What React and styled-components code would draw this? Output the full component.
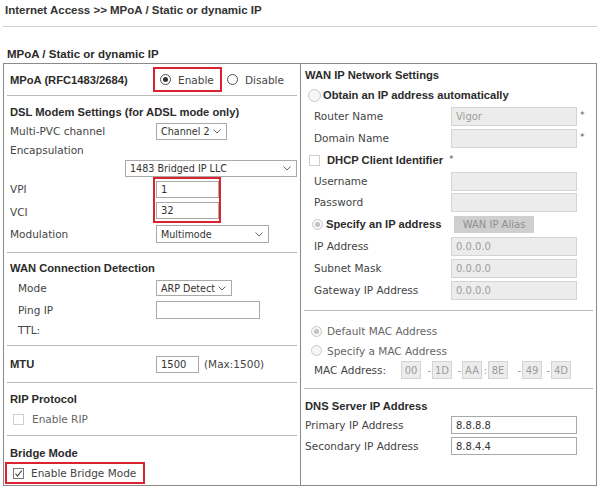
import React from 'react';
import styled, { createGlobalStyle } from 'styled-components';

const GlobalStyle = createGlobalStyle`
  html, body {
    margin: 0;
    padding: 0;
    background: #fff;
  }
  body {
    font-family: "DejaVu Sans", Verdana, sans-serif;
    font-size: 10.5px;
    color: #444;
  }
  * {
    box-sizing: border-box;
  }
`;

const Page = styled.div`
  width: 600px;
  height: 489px;
  overflow: hidden;
`;

const PageTitle = styled.div`
  height: 20px;
  line-height: 20px;
  padding-left: 5px;
  font-family: "Liberation Sans", Arial, sans-serif;
  font-weight: bold;
  font-size: 11.5px;
  color: #333;
`;

const Rule = styled.div`
  margin: 6px 3px 0 3px;
  border-top: 1px solid #d0d0d0;
`;

const Caption = styled.div`
  margin-top: 18px;
  height: 18px;
  line-height: 18px;
  padding-left: 7px;
  font-family: "Liberation Sans", Arial, sans-serif;
  font-weight: bold;
  font-size: 11.5px;
  color: #2b2b2b;
`;

const Frame = styled.div`
  margin: 0 3px;
  height: 423px;
  border: 1px solid #8a8a8a;
  display: grid;
  grid-template-columns: 297px 1fr;
`;

const Column = styled.div`
  padding: 0 3px;
  border-right: ${(p) => (p.$last ? 'none' : '1px solid #8a8a8a')};
  display: flex;
  flex-direction: column;
  overflow: hidden;
`;

const Section = styled.div`
  border-top: ${(p) => (p.$divider ? '1px solid #b9b9b9' : 'none')};
  padding-top: ${(p) => p.$pt || 0}px;
  padding-bottom: ${(p) => p.$pb || 0}px;
`;

const Row = styled.div`
  display: flex;
  align-items: center;
  height: ${(p) => p.$h}px;
  padding-left: ${(p) => (p.$indent === undefined ? 3 : p.$indent)}px;
  white-space: nowrap;
`;

const Heading = styled.span`
  font-family: "Liberation Sans", Arial, sans-serif;
  font-weight: bold;
  font-size: 11.2px;
  color: #2b2b2b;
`;

const Label = styled.span`
  flex-shrink: 0;
  width: ${(p) => p.$w}px;
  color: ${(p) => (p.$muted ? '#666' : '#444')};
`;

const Text = styled.span`
  margin-left: ${(p) => p.$gap || 0}px;
  color: ${(p) => (p.$muted ? '#666' : '#444')};
`;

const Field = styled.input`
  width: ${(p) => p.$w}px;
  height: ${(p) => p.$h || 18}px;
  margin: 0;
  padding: 0 ${(p) => (p.$center ? 0 : 4)}px;
  text-align: ${(p) => (p.$center ? 'center' : 'left')};
  font-family: "DejaVu Sans", Verdana, sans-serif;
  font-size: 10px;
  border: 1px solid ${(p) => (p.disabled ? '#d4d4d4' : '#a9a9a9')};
  background: ${(p) => (p.disabled ? '#ececec' : '#fff')};
  color: ${(p) => (p.disabled ? '#9c9c9c' : '#333')};
  border-radius: 0;
  outline: none;
`;

const SelectBox = styled.div`
  width: ${(p) => p.$w}px;
  height: ${(p) => p.$h || 17}px;
  margin-left: ${(p) => p.$offset || 0}px;
  border: 1px solid #a9a9a9;
  background: #fff;
  display: flex;
  align-items: center;
  justify-content: space-between;
  padding: 0 5px 0 4px;
  font-size: 9.6px;
  color: #333;
`;

const Highlight = styled.div`
  border: 2px solid #d9232e;
  width: ${(p) => p.$w}px;
  height: ${(p) => p.$h}px;
  margin-left: ${(p) => p.$offset || 0}px;
  padding-left: ${(p) => p.$pl || 0}px;
  display: flex;
  flex-direction: ${(p) => (p.$stack ? 'column' : 'row')};
  align-items: ${(p) => (p.$stack ? 'flex-start' : 'center')};
  justify-content: ${(p) => (p.$stack ? 'center' : 'flex-start')};
  gap: ${(p) => p.$gap || 0}px;
`;

const Stack = styled.div`
  display: flex;
  flex-direction: column;
`;

const Group = styled.div`
  display: flex;
  align-items: center;
`;

const Radio = styled.span`
  flex-shrink: 0;
  position: relative;
  width: ${(p) => p.$size || 11}px;
  height: ${(p) => p.$size || 11}px;
  margin-left: ${(p) => p.$gap || 0}px;
  border-radius: 50%;
  border: 1px solid ${(p) => (p.$disabled ? '#c9c9c9' : '#505050')};
  background: ${(p) => (p.$disabled ? '#f6f6f6' : '#fff')};

  &::after {
    content: '';
    display: ${(p) => (p.$checked ? 'block' : 'none')};
    position: absolute;
    left: 50%;
    top: 50%;
    width: 5px;
    height: 5px;
    margin: -2.5px 0 0 -2.5px;
    border-radius: 50%;
    background: ${(p) => (p.$disabled ? '#c2c2c2' : '#333')};
  }
`;

const Check = styled.span`
  flex-shrink: 0;
  width: 11px;
  height: 11px;
  border: 1px solid ${(p) => (p.$disabled ? '#cfcfcf' : '#777')};
  background: #fff;
  display: flex;
  align-items: center;
  justify-content: center;
`;

const Star = styled.span`
  margin-left: ${(p) => p.$gap || 3}px;
  font-size: 9px;
  color: #555;
  align-self: flex-start;
  margin-top: 5px;
`;

const AliasButton = styled.span`
  width: 80px;
  height: 17px;
  background: #cfcfcf;
  color: #8e8e8e;
  font-size: 10px;
  display: flex;
  align-items: center;
  justify-content: center;
`;

const Sep = styled.span`
  width: ${(p) => p.$w}px;
  text-align: right;
  padding-right: 1px;
  color: #999;
  font-size: 10px;
`;

const Chevron = () => (
  <svg width="8" height="5" viewBox="0 0 8 5">
    <polyline points="0.5,0.5 4,4 7.5,0.5" fill="none" stroke="#666" strokeWidth="1" />
  </svg>
);

const Tick = () => (
  <svg width="9" height="9" viewBox="0 0 9 9">
    <polyline points="1.5,4.5 3.5,7 7.8,1.5" fill="none" stroke="#444" strokeWidth="1.2" />
  </svg>
);

const Select = ({ w, offset, h, children }) => (
  <SelectBox $w={w} $offset={offset} $h={h}>
    <span>{children}</span>
    <Chevron />
  </SelectBox>
);

const macParts = [
  { sep: null, v: '00' },
  { sep: { w: 11, c: '-' }, v: '1D' },
  { sep: { w: 10, c: '-' }, v: 'AA' },
  { sep: { w: 6, c: ':' }, v: '8E' },
  { sep: { w: 14, c: '-' }, v: '49' },
  { sep: { w: 9, c: '-' }, v: '4D' },
];

const App = () => {
  return (
    <Page>
      <GlobalStyle />
      <PageTitle>Internet Access &gt;&gt; MPoA / Static or dynamic IP</PageTitle>
      <Rule />
      <Caption>MPoA / Static or dynamic IP</Caption>

      <Frame>
        {/* colonne gauche */}
        <Column>
          <Section>
            <Row $h={31}>
              <Label $w={143}>
                <Heading>MPoA (RFC1483/2684)</Heading>
              </Label>
              <Highlight $w={69} $h={25} $pl={5}>
                <Radio $checked />
                <Text $gap={7}>Enable</Text>
              </Highlight>
              <Radio $gap={5} />
              <Text $gap={7}>Disable</Text>
            </Row>
          </Section>

          <Section $divider $pt={6} $pb={7}>
            <Row $h={20}>
              <Heading>DSL Modem Settings (for ADSL mode only)</Heading>
            </Row>
            <Row $h={18}>
              <Label $w={146}>Multi-PVC channel</Label>
              <Select w={71}>Channel 2</Select>
            </Row>
            <Row $h={20}>
              <Label $w={146}>Encapsulation</Label>
            </Row>
            <Row $h={17}>
              <Select w={172} offset={115}>1483 Bridged IP LLC</Select>
            </Row>
            <Row $h={46}>
              <Stack>
                <Row $h={23} $indent={0}>
                  <Label $w={143}>VPI</Label>
                </Row>
                <Row $h={23} $indent={0}>
                  <Label $w={143}>VCI</Label>
                </Row>
              </Stack>
              <Highlight $w={68} $h={46} $pl={1} $stack $gap={4}>
                <Field $w={63} $h={17} value="1" readOnly />
                <Field $w={63} $h={17} value="32" readOnly />
              </Highlight>
            </Row>
            <Row $h={22}>
              <Label $w={146}>Modulation</Label>
              <Select w={113} h={18}>Multimode</Select>
            </Row>
          </Section>

          <Section $divider $pt={5} $pb={7}>
            <Row $h={20}>
              <Heading>WAN Connection Detection</Heading>
            </Row>
            <Row $h={20} $indent={11}>
              <Label $w={138}>Mode</Label>
              <Select w={76} h={16}>ARP Detect</Select>
            </Row>
            <Row $h={24} $indent={11}>
              <Label $w={138}>Ping IP</Label>
              <Field $w={104} value="" readOnly />
            </Row>
            <Row $h={16} $indent={11}>
              <Label $w={138}>TTL:</Label>
            </Row>
          </Section>

          <Section $divider>
            <Row $h={36}>
              <Label $w={146}>
                <Heading>MTU</Heading>
              </Label>
              <Field $w={43} $h={17} value="1500" readOnly />
              <Text $gap={5}>(Max:1500)</Text>
            </Row>
          </Section>

          <Section $divider $pt={6} $pb={6}>
            <Row $h={20}>
              <Heading>RIP Protocol</Heading>
            </Row>
            <Row $h={20} $indent={6}>
              <Check $disabled />
              <Text $gap={8} $muted>
                Enable RIP
              </Text>
            </Row>
          </Section>

          <Section $divider $pt={8}>
            <Row $h={18}>
              <Heading>Bridge Mode</Heading>
            </Row>
            <Highlight $w={140} $h={22} $offset={-2} $pl={6}>
              <Check>
                <Tick />
              </Check>
              <Text $gap={7}>Enable Bridge Mode</Text>
            </Highlight>
          </Section>
        </Column>

        {/* colonne droite */}
        <Column $last>
          <Section $pt={1} $pb={9}>
            <Row $h={20} $indent={1}>
              <Heading>WAN IP Network Settings</Heading>
            </Row>
            <Row $h={20} $indent={4}>
              <Radio $disabled $size={13} />
              <Text $gap={2}>
                <Heading>Obtain an IP address automatically</Heading>
              </Text>
            </Row>
            <Row $h={22} $indent={10}>
              <Label $w={137}>Router Name</Label>
              <Field $w={126} $h={19} value="Vigor" disabled readOnly />
              <Star>*</Star>
            </Row>
            <Row $h={22} $indent={10}>
              <Label $w={137}>Domain Name</Label>
              <Field $w={126} $h={19} value="" disabled readOnly />
              <Star>*</Star>
            </Row>
            <Row $h={22} $indent={5}>
              <Check $disabled />
              <Text $gap={7}>
                <Heading>DHCP Client Identifier</Heading>
              </Text>
              <Star $gap={6}>*</Star>
            </Row>
            <Row $h={20} $indent={10}>
              <Label $w={137}>Username</Label>
              <Field $w={126} $h={19} value="" disabled readOnly />
            </Row>
            <Row $h={22} $indent={10}>
              <Label $w={137}>Password</Label>
              <Field $w={126} $h={19} value="" disabled readOnly />
            </Row>
            <Row $h={22} $indent={8}>
              <Label $w={142}>
                <Group>
                  <Radio $disabled $checked />
                  <Text $gap={3}>
                    <Heading>Specify an IP address</Heading>
                  </Text>
                </Group>
              </Label>
              <AliasButton>WAN IP Alias</AliasButton>
            </Row>
            <Row $h={22} $indent={10}>
              <Label $w={137}>IP Address</Label>
              <Field $w={126} $h={19} value="0.0.0.0" disabled readOnly />
            </Row>
            <Row $h={22} $indent={10}>
              <Label $w={137}>Subnet Mask</Label>
              <Field $w={126} $h={19} value="0.0.0.0" disabled readOnly />
            </Row>
            <Row $h={22} $indent={10}>
              <Label $w={137}>Gateway IP Address</Label>
              <Field $w={126} $h={19} value="0.0.0.0" disabled readOnly />
            </Row>
          </Section>

          <Section $divider $pt={10} $pb={8}>
            <Row $h={20} $indent={7}>
              <Radio $disabled $checked />
              <Text $gap={5} $muted>
                Default MAC Address
              </Text>
            </Row>
            <Row $h={19} $indent={7}>
              <Radio $disabled />
              <Text $gap={5} $muted>
                Specify a MAC Address
              </Text>
            </Row>
            <Row $h={20} $indent={10}>
              <Label $w={87}>MAC Address:</Label>
              {macParts.map((p, i) => (
                <React.Fragment key={i}>
                  {p.sep && <Sep $w={p.sep.w}>{p.sep.c}</Sep>}
                  <Field $w={20} $h={18} value={p.v} disabled readOnly $center />
                </React.Fragment>
              ))}
            </Row>
          </Section>

          <Section $divider $pt={8}>
            <Row $h={18} $indent={1}>
              <Heading>DNS Server IP Address</Heading>
            </Row>
            <Row $h={20} $indent={1}>
              <Label $w={146}>Primary IP Address</Label>
              <Field $w={126} value="8.8.8.8" readOnly />
            </Row>
            <Row $h={22} $indent={1}>
              <Label $w={146}>Secondary IP Address</Label>
              <Field $w={126} value="8.8.4.4" readOnly />
            </Row>
          </Section>
        </Column>
      </Frame>
    </Page>
  );
};

export default App;
